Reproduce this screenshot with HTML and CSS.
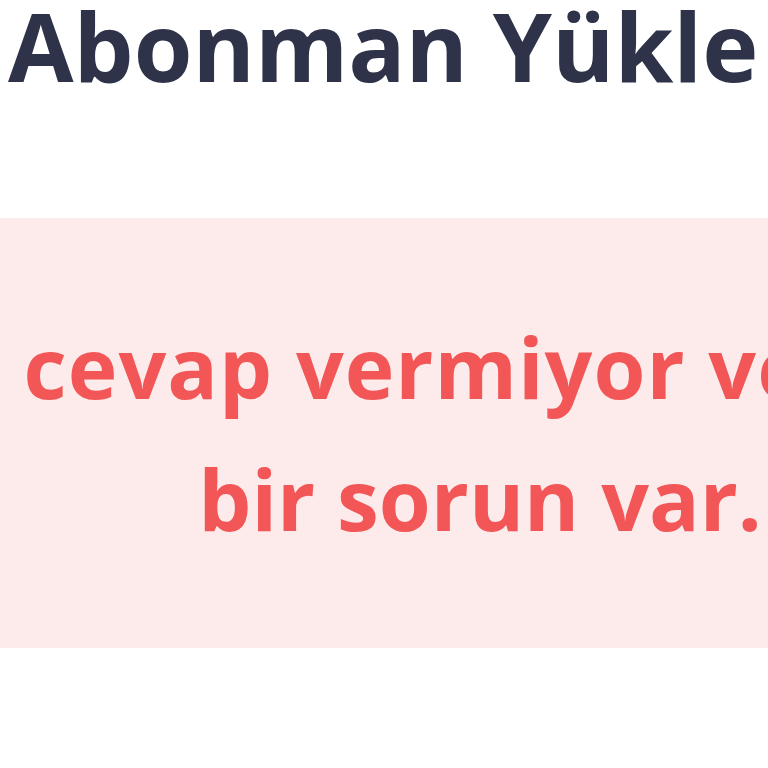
FILE: index.html
```html
<!DOCTYPE html>
<html lang="tr">
<head>
<meta charset="utf-8">
<link rel="stylesheet" href="styles.css">
</head>
<body>
<div class="page">
  <h1 class="title">Abonman Yükle</h1>
  <div class="alert">
    <p class="alert-text"><span class="line">Sunucu cevap vermiyor ve bağlantıda</span><span class="line">bir sorun var.</span></p>
  </div>
</div>
</body>
</html>
```
FILE: styles.css
```css
html, body {
  margin: 0;
  padding: 0;
  background: #ffffff;
  overflow: hidden;
}
.page {
  width: 768px;
  height: 768px;
  overflow: hidden;
}
.title {
  margin: 0;
  padding: 0 0 0 8px;
  height: 218px;
  font-family: "Open Sans", "Noto Sans", sans-serif;
  font-weight: 700;
  font-size: 95px;
  line-height: 90px;
  color: #2e3349;
  white-space: nowrap;
}
.alert {
  height: 430px;
  width: 960px;
  background: #fdeaea;
  display: flex;
  align-items: center;
  justify-content: center;
}
.alert-text {
  margin: 0;
  font-family: "Open Sans", "Noto Sans", sans-serif;
  font-weight: 700;
  font-size: 84px;
  line-height: 132px;
  color: #f25656;
  text-align: center;
  white-space: nowrap;
  display: flex;
  flex-direction: column;
  align-items: center;
}
.line {
  display: block;
}
.line:first-child {
  letter-spacing: 1px;
  padding-left: 14px;
}
```
